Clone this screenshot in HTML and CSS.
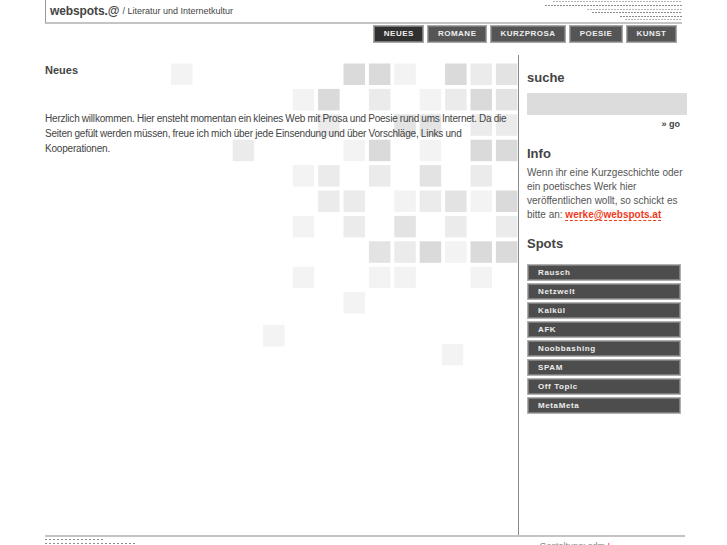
FILE: index.html
```html
<!DOCTYPE html>
<html lang="de">
<head>
    <meta charset="UTF-8">
    <title>webspots.@ - Literatur und Internetkultur</title>
    <link rel="stylesheet" href="styles.css">
</head>
<body>
<div class="page">
    <!-- background tiles -->
    <svg class="tiles" width="727" height="545" viewBox="0 0 727 545">
        <g>
            <rect x="171" y="63.5" width="21.5" height="21.5" fill="#f3f3f3"/>
            <rect x="343.5" y="63.5" width="21.5" height="21.5" fill="#dadada"/>
            <rect x="368.9" y="63.5" width="21.5" height="21.5" fill="#dadada"/>
            <rect x="394.3" y="63.5" width="21.5" height="21.5" fill="#f3f3f3"/>
            <rect x="445.1" y="63.5" width="21.5" height="21.5" fill="#dadada"/>
            <rect x="470.5" y="63.5" width="21.5" height="21.5" fill="#ebebeb"/>
            <rect x="495.9" y="63.5" width="21.5" height="21.5" fill="#e3e3e3"/>

            <rect x="292.7" y="88.9" width="21.5" height="21.5" fill="#f3f3f3"/>
            <rect x="318.1" y="88.9" width="21.5" height="21.5" fill="#dadada"/>
            <rect x="368.9" y="88.9" width="21.5" height="21.5" fill="#ebebeb"/>
            <rect x="419.7" y="88.9" width="21.5" height="21.5" fill="#f3f3f3"/>
            <rect x="445.1" y="88.9" width="21.5" height="21.5" fill="#ebebeb"/>
            <rect x="470.5" y="88.9" width="21.5" height="21.5" fill="#dadada"/>
            <rect x="495.9" y="88.9" width="21.5" height="21.5" fill="#e3e3e3"/>

            <rect x="318.1" y="114.3" width="21.5" height="21.5" fill="#ebebeb"/>
            <rect x="394.3" y="114.3" width="21.5" height="21.5" fill="#e3e3e3"/>
            <rect x="419.7" y="114.3" width="21.5" height="21.5" fill="#e3e3e3"/>
            <rect x="470.5" y="114.3" width="21.5" height="21.5" fill="#ebebeb"/>
            <rect x="495.9" y="114.3" width="21.5" height="21.5" fill="#ebebeb"/>

            <rect x="232.7" y="139.7" width="21.5" height="21.5" fill="#ebebeb"/>
            <rect x="343.5" y="139.7" width="21.5" height="21.5" fill="#f3f3f3"/>
            <rect x="368.9" y="139.7" width="21.5" height="21.5" fill="#dadada"/>
            <rect x="419.7" y="139.7" width="21.5" height="21.5" fill="#f3f3f3"/>
            <rect x="470.5" y="139.7" width="21.5" height="21.5" fill="#dadada"/>
            <rect x="495.9" y="139.7" width="21.5" height="21.5" fill="#dadada"/>

            <rect x="292.7" y="165.1" width="21.5" height="21.5" fill="#f3f3f3"/>
            <rect x="318.1" y="165.1" width="21.5" height="21.5" fill="#ebebeb"/>
            <rect x="368.9" y="165.1" width="21.5" height="21.5" fill="#ebebeb"/>
            <rect x="419.7" y="165.1" width="21.5" height="21.5" fill="#e3e3e3"/>
            <rect x="470.5" y="165.1" width="21.5" height="21.5" fill="#ebebeb"/>

            <rect x="318.1" y="190.5" width="21.5" height="21.5" fill="#ebebeb"/>
            <rect x="343.5" y="190.5" width="21.5" height="21.5" fill="#ebebeb"/>
            <rect x="394.3" y="190.5" width="21.5" height="21.5" fill="#f3f3f3"/>
            <rect x="419.7" y="190.5" width="21.5" height="21.5" fill="#ebebeb"/>
            <rect x="445.1" y="190.5" width="21.5" height="21.5" fill="#e3e3e3"/>
            <rect x="470.5" y="190.5" width="21.5" height="21.5" fill="#f3f3f3"/>
            <rect x="495.9" y="190.5" width="21.5" height="21.5" fill="#dadada"/>

            <rect x="292.7" y="215.9" width="21.5" height="21.5" fill="#f3f3f3"/>
            <rect x="343.5" y="215.9" width="21.5" height="21.5" fill="#ebebeb"/>
            <rect x="394.3" y="215.9" width="21.5" height="21.5" fill="#e3e3e3"/>
            <rect x="445.1" y="215.9" width="21.5" height="21.5" fill="#ebebeb"/>
            <rect x="495.9" y="215.9" width="21.5" height="21.5" fill="#ebebeb"/>

            <rect x="368.9" y="241.3" width="21.5" height="21.5" fill="#e3e3e3"/>
            <rect x="394.3" y="241.3" width="21.5" height="21.5" fill="#ebebeb"/>
            <rect x="419.7" y="241.3" width="21.5" height="21.5" fill="#dadada"/>
            <rect x="445.1" y="241.3" width="21.5" height="21.5" fill="#f3f3f3"/>
            <rect x="470.5" y="241.3" width="21.5" height="21.5" fill="#dadada"/>
            <rect x="495.9" y="241.3" width="21.5" height="21.5" fill="#dadada"/>

            <rect x="292.7" y="266.7" width="21.5" height="21.5" fill="#f3f3f3"/>
            <rect x="368.9" y="266.7" width="21.5" height="21.5" fill="#f3f3f3"/>
            <rect x="394.3" y="266.7" width="21.5" height="21.5" fill="#f3f3f3"/>
            <rect x="470.5" y="266.7" width="21.5" height="21.5" fill="#f3f3f3"/>

            <rect x="343.5" y="292.1" width="21.5" height="21.5" fill="#f3f3f3"/>
            <rect x="263" y="325" width="21.5" height="21.5" fill="#f3f3f3"/>
            <rect x="441.7" y="344" width="21.5" height="21.5" fill="#f3f3f3"/>
        </g>
    </svg>

    <header class="top">
        <span class="logo">webspots.@</span>
        <span class="slogan">/ Literatur und Internetkultur</span>
        <div class="dots">
            <span class="d1"></span>
            <span class="d2"></span>
            <span class="d3"></span>
            <span class="d4"></span>
            <span class="d5"></span>
            <span class="d6"></span>
        </div>
    </header>

    <nav class="nav">
        <a href="#" class="active">NEUES</a>
        <a href="#">ROMANE</a>
        <a href="#">KURZPROSA</a>
        <a href="#">POESIE</a>
        <a href="#">KUNST</a>
    </nav>

    <div class="main">
        <div class="content">
            <h2>Neues</h2>
            <p>Herzlich willkommen. Hier ensteht momentan ein kleines Web mit Prosa und Poesie rund ums Internet. Da die Seiten gefült werden müssen, freue ich mich über jede Einsendung und über Vorschläge, Links und Kooperationen.</p>
        </div>

        <aside class="side">
            <h3 class="first">suche</h3>
            <div class="search"></div>
            <div class="go">» go</div>

            <h3>Info</h3>
            <p class="info">Wenn ihr eine Kurzgeschichte oder ein poetisches Werk hier veröffentlichen wollt, so schickt es bitte an: <a href="#" class="mail">werke@webspots.at</a></p>

            <h3 class="spots-title">Spots</h3>
            <ul class="spots">
                <li><a href="#">Rausch</a></li>
                <li><a href="#">Netzwelt</a></li>
                <li><a href="#">Kalkül</a></li>
                <li><a href="#">AFK</a></li>
                <li><a href="#">Noobbashing</a></li>
                <li><a href="#">SPAM</a></li>
                <li><a href="#">Off Topic</a></li>
                <li><a href="#">MetaMeta</a></li>
            </ul>
        </aside>
    </div>

    <footer class="foot">
        <div class="foot-dots">
            <span class="f1"></span>
            <span class="f2"></span>
        </div>
        <div class="credit">Gestaltung: sdm <span>!</span></div>
    </footer>
</div>
</body>
</html>
```

FILE: styles.css
```css
* {
    margin: 0;
    padding: 0;
    box-sizing: border-box;
}

body {
    font-family: 'Liberation Sans', Arial, sans-serif;
    background-color: #fff;
    color: #444;
    overflow: hidden;
}

.page {
    position: relative;
    width: 642px;
    margin-left: 45px;
}

.tiles {
    position: absolute;
    left: -45px;
    top: 0;
    z-index: 0;
}

.top,
.nav,
.main,
.foot {
    position: relative;
    z-index: 1;
}

/* header */
.top {
    width: 637px;
    height: 24px;
    border-left: 1px solid #999;
    border-bottom: 2px solid #c4c4c4;
    padding-left: 4px;
    display: flex;
    align-items: center;
    gap: 3px;
}

.logo {
    font-size: 12px;
    font-weight: bold;
    letter-spacing: -0.1px;
    color: #444;
}

.slogan {
    font-size: 9px;
    color: #444;
}

.dots span {
    position: absolute;
    right: 0;
    height: 1px;
    background: repeating-linear-gradient(90deg, #8c8c8c 0 2px, transparent 2px 3px);
}

.dots .d1 { top: 1px; width: 129px; background: repeating-linear-gradient(90deg, #b5b5b5 0 2px, transparent 2px 3px); }
.dots .d2 { top: 5px; width: 137px; }
.dots .d3 { top: 9px; width: 95px; background: repeating-linear-gradient(90deg, #b5b5b5 0 2px, transparent 2px 3px); }
.dots .d4 { top: 12px; width: 90px; }
.dots .d5 { top: 16px; width: 62px; }
.dots .d6 { top: 19px; width: 57px; background: repeating-linear-gradient(90deg, #b5b5b5 0 2px, transparent 2px 3px); }

/* navigation */
.nav {
    display: flex;
    justify-content: flex-end;
    gap: 3px;
    margin-top: 1px;
    padding-right: 10px;
}

.nav a {
    display: block;
    height: 18px;
    line-height: 16px;
    padding: 0 9.5px;
    font-size: 8px;
    font-weight: bold;
    letter-spacing: 0.5px;
    color: #eee;
    text-decoration: none;
    background-color: #555;
    border: 1px solid #a8a8a8;
    box-shadow: inset 0 0 0 1px #7a7a7a;
}

.nav a.active {
    background-color: #303030;
}

/* main area */
.main {
    display: flex;
    margin-top: 12px;
}

.content {
    width: 473px;
    height: 480px;
    padding-right: 7px;
}

.content h2 {
    font-size: 11px;
    line-height: 14px;
    margin-top: 8px;
    color: #444;
}

.content p {
    font-size: 10px;
    line-height: 15px;
    letter-spacing: -0.2px;
    word-spacing: -0.3px;
    margin-top: 34px;
    color: #444;
}

/* sidebar */
.side {
    width: 169px;
    border-left: 1px solid #8a8a8a;
    padding-left: 8px;
}

.side h3 {
    font-size: 13px;
    line-height: 16px;
    color: #444;
    margin-top: 16px;
}

.side h3.first {
    margin-top: 15px;
}

.side h3.spots-title {
    margin-top: 14px;
}

.search {
    height: 22px;
    width: 160px;
    margin-top: 7px;
    background-color: #dcdcdc;
}

.go {
    width: 160px;
    text-align: right;
    padding-right: 7px;
    margin-top: 3px;
    font-size: 9px;
    line-height: 12px;
    font-weight: bold;
    color: #444;
}

.info {
    font-size: 10px;
    line-height: 14px;
    margin-top: 4px;
    color: #555;
    width: 160px;
}

.mail {
    color: #ee3b1c;
    font-weight: bold;
    text-decoration: none;
    border-bottom: 1px dashed #ee3b1c;
}

.spots {
    list-style: none;
    display: flex;
    flex-direction: column;
    gap: 2px;
    width: 154px;
    margin-top: 12px;
}

.spots a {
    display: block;
    height: 17px;
    line-height: 15px;
    padding-left: 10px;
    font-size: 8px;
    font-weight: bold;
    letter-spacing: 0.6px;
    color: #eee;
    text-decoration: none;
    background-color: #4d4d4d;
    border: 1px solid #b0b0b0;
    box-shadow: inset 0 0 0 1px #7d7d7d;
}

/* footer */
.foot {
    width: 640px;
    border-top: 2px solid #c4c4c4;
    display: flex;
    justify-content: space-between;
}

.foot-dots span {
    display: block;
    height: 1px;
    margin-top: 3px;
    background: repeating-linear-gradient(90deg, #8c8c8c 0 2px, transparent 2px 4px);
}

.foot-dots .f1 { width: 60px; margin-top: 2px; }
.foot-dots .f2 { width: 90px; }

.credit {
    font-size: 9px;
    color: #888;
    margin-top: 4px;
    padding-right: 75px;
}

.credit span {
    color: #ee3b1c;
}
```
